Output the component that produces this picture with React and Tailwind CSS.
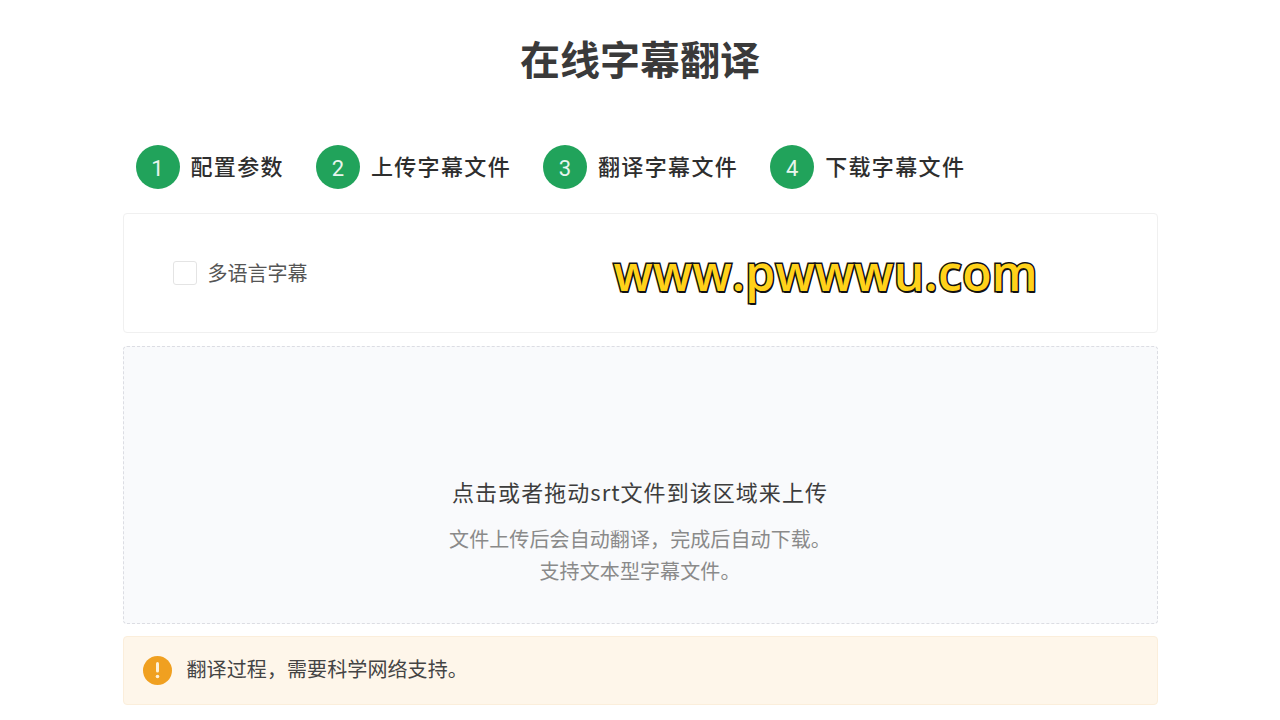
import React from 'react';

const steps = [
  { n: 1, label: '配置参数' },
  { n: 2, label: '上传字幕文件' },
  { n: 3, label: '翻译字幕文件' },
  { n: 4, label: '下载字幕文件' },
];

const cjk = "font-['Noto_Sans_CJK_SC','Noto_Sans',sans-serif]";

const App = () => {
  return (
    <div className={`h-[720px] overflow-hidden bg-white ${cjk}`}>
      <div className="relative mx-auto w-[1035px] pt-[29px]">
        <h1 className="text-center text-[40px] leading-[58px] font-semibold text-[#3a3a3a]">在线字幕翻译</h1>

        <div className="mt-[58px] flex items-center gap-[32px] pl-[13px]">
          {steps.map(step => (
            <div key={step.n} className="flex items-center gap-[11px]">
              <div className="flex h-[44px] w-[44px] items-center justify-center rounded-full bg-[#21a35b] pt-[2px] font-['Roboto',sans-serif] text-[22px] text-[#e8f5ee]">
                {step.n}
              </div>
              <span className="pb-[4px] text-[22px] leading-[32px] font-medium tracking-[1.35px] text-[#2e2e2e]">{step.label}</span>
            </div>
          ))}
        </div>

        <div className="mt-[24px] flex h-[120px] items-center rounded-[4px] border border-[#f0f0f0] bg-white pl-[49px]">
          <div className="h-[24px] w-[24px] rounded-[3px] border border-[#e4e4e4] bg-white" />
          <span className="ml-[11px] text-[20px] leading-[28px] text-[#555555]">多语言字幕</span>
        </div>

        <div className="mt-[13px] flex h-[278px] flex-col items-center rounded-[4px] border border-dashed border-[#dcdde3] bg-[#f9fafc] pt-[128px]">
          <p className="text-[22px] leading-[32px] tracking-[1.05px] text-[#3d3d3d]">点击或者拖动srt文件到该区域来上传</p>
          <p className="mt-[16px] text-[20px] leading-[32px] tracking-[0.1px] text-[#8a8a8a]">文件上传后会自动翻译，完成后自动下载。</p>
          <p className="text-[20px] leading-[32px] tracking-[0.1px] text-[#8a8a8a]">支持文本型字幕文件。</p>
        </div>

        <div className="mt-[12px] flex h-[69px] items-center rounded-[4px] border border-[#fbeedb] bg-[#fef6ea] pl-[19px]">
          <div className="flex h-[29px] w-[29px] items-center justify-center rounded-full bg-[#f0a020]">
            <svg width="5" height="17" viewBox="0 0 5 17">
              <rect x="1" y="0" width="3" height="10.5" rx="1.5" fill="#fdf0d8" />
              <circle cx="2.5" cy="14.5" r="1.8" fill="#fdf0d8" />
            </svg>
          </div>
          <span className="ml-[15px] pb-[4px] text-[20px] leading-[28px] tracking-[0.1px] text-[#444444]">翻译过程，需要科学网络支持。</span>
        </div>

        {/* watermark sits on top of the page */}
        <div className="absolute left-[491px] top-[241px] font-['Open_Sans',sans-serif] text-[48px] leading-[64px] font-semibold tracking-[0.3px] whitespace-nowrap text-[#ffd21a] [-webkit-text-stroke:3px_#111111] [paint-order:stroke_fill] [text-shadow:1px_2px_0_#111111]">
          www.pwwwu.com
        </div>
      </div>
    </div>
  );
};

export default App;
